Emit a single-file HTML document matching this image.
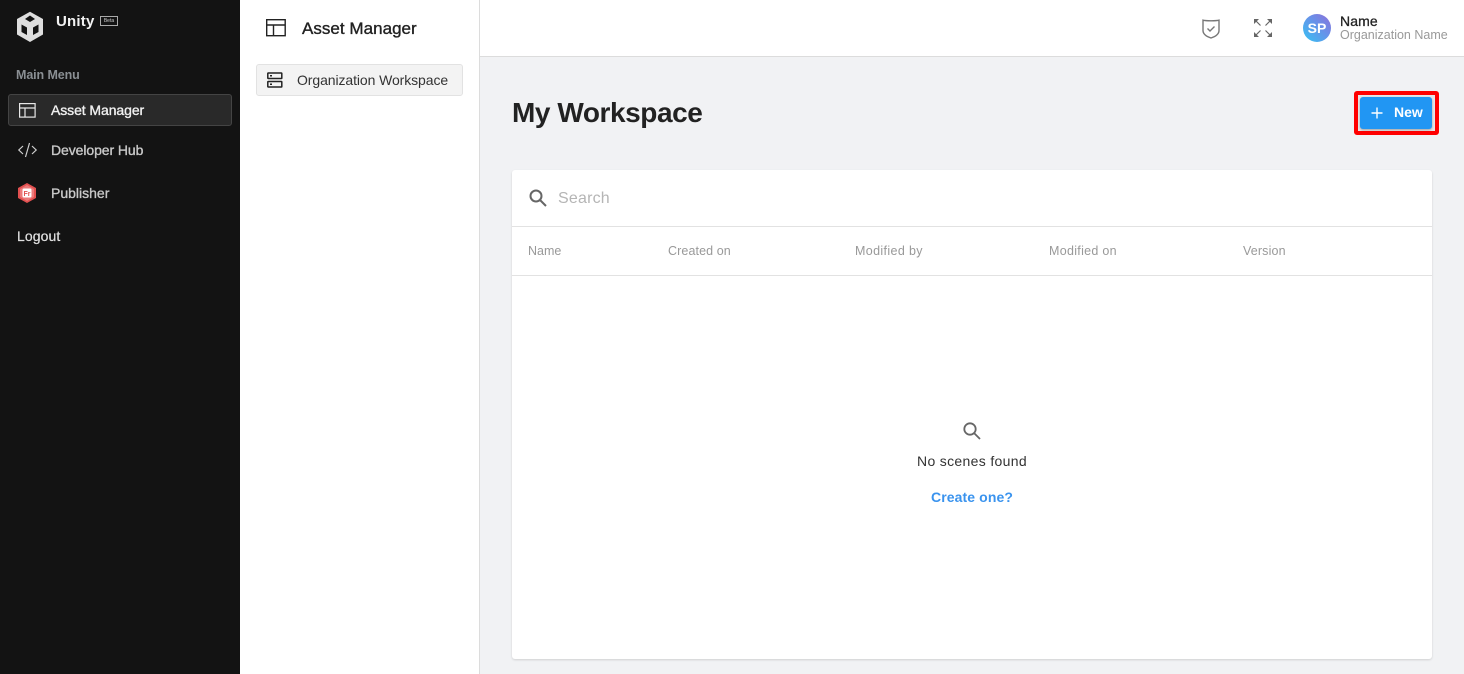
<!DOCTYPE html>
<html><head><meta charset="utf-8"><style>
html,body{margin:0;padding:0;width:1464px;height:674px;overflow:hidden;background:#f1f2f4;font-family:"Liberation Sans",sans-serif}
.a{position:absolute;white-space:nowrap;line-height:1}
svg{position:absolute;overflow:visible}
.m{font-size:14px;-webkit-text-stroke:.35px currentColor}
.h{top:245px;font-size:12.500px;color:#999}
</style></head><body>
<div class="a" style="left:0;top:0;width:240px;height:674px;background:#131313"></div>
<div class="a" style="left:240px;top:0;width:239px;height:674px;background:#fff;border-right:1px solid #dcdcdc"></div>
<div class="a" style="left:480px;top:0;width:984px;height:56px;background:#fff;border-bottom:1px solid #dcdcdc"></div>

<svg style="left:15px;top:11px" width="30" height="32" viewBox="0 0 30 32"><path d="M15 .8 28 8v15.500L15 31 2 23.500V8z" fill="#dedede"/><path d="M15 4.500 10 8l5 3 5-3zM6.500 13.500v7.500l5.500 3v-7.500zM23.500 13.500v7.500L18 24v-7.500z" fill="#131313"/></svg>
<div class="a" style="left:56px;top:14px;font-size:15px;font-weight:700;color:#f2f2f2;letter-spacing:.2px">Unity</div>
<div class="a" style="left:100px;top:16px;width:16px;height:8px;border:1px solid #aaa;color:#ccc;font-size:5px;line-height:8px;text-align:center">Beta</div>
<div class="a" style="left:16px;top:69px;font-size:12.500px;font-weight:700;color:#8a8f93;letter-spacing:-.1px">Main Menu</div>

<div class="a" style="left:8px;top:94px;width:222px;height:30px;background:#292929;border:1px solid #444;border-radius:3px"></div>
<svg style="left:19px;top:103px" width="17" height="15" fill="none" stroke="#e8e8e8" stroke-width="1.200"><rect x=".6" y=".6" width="15.500" height="13.500"/><path d="M.6 5h15.500M6 5v9"/></svg>
<div class="a m" style="left:51px;top:103px;color:#f0f0f0;letter-spacing:-.08px">Asset Manager</div>

<svg style="left:18px;top:142px" width="19" height="16" fill="none" stroke="#cfcfcf" stroke-width="1.200"><path d="M5 4 .8 8 5 12M14 4l4.200 4L14 12M11.500 1 7.500 15"/></svg>
<div class="a m" style="left:51px;top:143px;color:#c8c8c8;letter-spacing:-.08px">Developer Hub</div>

<svg style="left:18px;top:183px" width="18" height="20" viewBox="0 0 18 20"><path d="M9 0 18 5v10l-9 5-9-5V5z" fill="#e25050"/><path d="M9 2 16 6v8l-7 4-7-4V6z" fill="#ec7a7a"/><rect x="4.500" y="5.500" width="9" height="9" rx="1.500" fill="#fff"/><text x="5.500" y="13" font-size="7" font-weight="700" fill="#e25050" font-family="Liberation Sans">Fr</text></svg>
<div class="a m" style="left:51px;top:186px;color:#c8c8c8">Publisher</div>
<div class="a" style="left:17px;top:229px;font-size:14px;color:#e0e0e0;letter-spacing:.1px;-webkit-text-stroke:.2px #e0e0e0">Logout</div>

<svg style="left:266px;top:19px" width="20" height="18" fill="none" stroke="#222" stroke-width="1.400"><rect x=".7" y=".7" width="18.500" height="16"/><path d="M.7 6h18.500M7.500 6v11"/></svg>
<div class="a" style="left:302px;top:20px;font-size:17px;color:#222;letter-spacing:.03px;-webkit-text-stroke:.35px #222">Asset Manager</div>
<div class="a" style="left:256px;top:64px;width:205px;height:30px;background:#f3f3f3;border:1px solid #e2e2e2;border-radius:3px"></div>
<svg style="left:267px;top:72px" width="16" height="16" fill="none" stroke="#222" stroke-width="1.500"><rect x=".8" y="1" width="14" height="5.500" rx=".5"/><rect x=".8" y="9.500" width="14" height="5.500" rx=".5"/><path d="M3 3.700h2M3 12.200h2"/></svg>
<div class="a" style="left:297px;top:73px;font-size:14px;color:#333;letter-spacing:-.09px">Organization Workspace</div>

<svg style="left:1201px;top:19px" width="20" height="20" fill="none" stroke="#777" stroke-width="1.400"><path d="M2 1.200c3 .8 13 .8 16 0v10.300c0 3.500-3.500 6-8 7.500-4.500-1.500-8-4-8-7.500z"/><path d="m6.500 9.500 2.500 2.500 4.500-4.500"/></svg>
<svg style="left:1254px;top:19px" width="18" height="18" fill="#666" stroke="none"><path d="M0 0h5L0 5zM18 0h-5l5 5zM0 18h5l-5-5zM18 18h-5l5-5z"/><path d="m2 2 4.500 4.500M16 2l-4.500 4.500M2 16l4.500-4.500M16 16l-4.500-4.500" stroke="#666" stroke-width="1.200"/></svg>
<svg style="left:1303px;top:14px" width="28" height="28"><defs><linearGradient id="g" x1="0" y1="1" x2="1" y2="0"><stop offset="0" stop-color="#35c3f3"/><stop offset=".6" stop-color="#6a8fe8"/><stop offset="1" stop-color="#8f6fd8"/></linearGradient></defs><circle cx="14" cy="14" r="14" fill="url(#g)"/><text x="14" y="19" text-anchor="middle" font-size="14" font-weight="700" fill="#fff" font-family="Liberation Sans">SP</text></svg>
<div class="a" style="left:1340px;top:14px;font-size:14px;color:#222;letter-spacing:.1px;-webkit-text-stroke:.3px #222">Name</div>
<div class="a" style="left:1340px;top:29px;font-size:12.500px;color:#999">Organization Name</div>

<div class="a" style="left:512px;top:99px;font-size:28px;font-weight:700;color:#222;letter-spacing:-.43px">My Workspace</div>
<div class="a" style="left:1354px;top:91px;width:77px;height:36px;border:4px solid #f00;border-radius:3px;background:#e4e6e8"></div>
<div class="a" style="left:1360px;top:97px;width:72px;height:32px;background:#2196f3;border-radius:3px;box-shadow:0 1px 2px rgba(0,0,0,.3)"></div>
<svg style="left:1371px;top:107px" width="12" height="12" stroke="#fff" stroke-width="1.400"><path d="M6 .5v11M.5 6h11"/></svg>
<div class="a" style="left:1394px;top:105px;font-size:14px;font-weight:700;color:#fff">New</div>

<div class="a" style="left:512px;top:170px;width:920px;height:489px;background:#fff;border-radius:3px;box-shadow:0 1px 2px rgba(0,0,0,.14)"></div>
<div class="a" style="left:512px;top:226px;width:920px;height:1px;background:#e2e2e2"></div>
<div class="a" style="left:512px;top:275px;width:920px;height:1px;background:#e2e2e2"></div>
<svg style="left:529px;top:189px" width="18" height="18" fill="none" stroke="#666" stroke-width="2"><circle cx="7" cy="7" r="5.500"/><path d="m11 11 6 6"/></svg>
<div class="a" style="left:558px;top:191px;font-size:16px;color:#b5b5b5;letter-spacing:.2px">Search</div>
<div class="a h" style="left:528px">Name</div>
<div class="a h" style="left:668px;letter-spacing:.1px">Created on</div>
<div class="a h" style="left:855px;letter-spacing:.36px">Modified by</div>
<div class="a h" style="left:1049px;letter-spacing:.3px">Modified on</div>
<div class="a h" style="left:1243px;letter-spacing:.14px">Version</div>
<svg style="left:963px;top:422px" width="18" height="18" fill="none" stroke="#666" stroke-width="1.800"><circle cx="7" cy="7" r="5.700"/><path d="m11 11 6 6"/></svg>
<div class="a" style="left:917px;top:454px;font-size:14px;color:#333;letter-spacing:.33px">No scenes found</div>
<div class="a" style="left:931px;top:490px;font-size:14px;font-weight:700;color:#3a93ee;letter-spacing:.1px">Create one?</div>
</body></html>
